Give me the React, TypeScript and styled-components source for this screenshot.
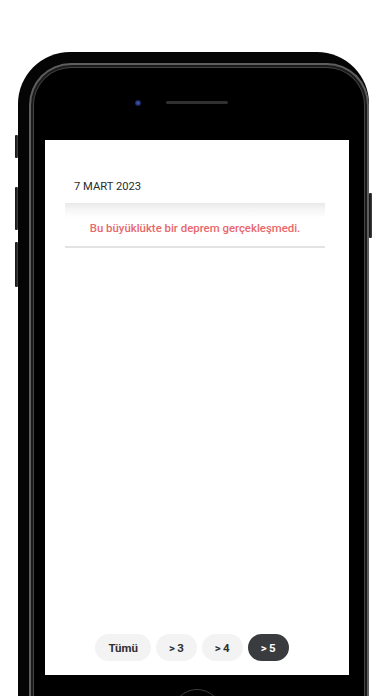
import React, { useState } from 'react'
import styled, { createGlobalStyle } from 'styled-components'

const GlobalStyle = createGlobalStyle`
  html, body {
    margin: 0;
    padding: 0;
    height: 696px;
    overflow: hidden;
    background: #ffffff;
    font-family: Roboto, Inter, "Liberation Sans", sans-serif;
  }
`

const Device = styled.div`
  display: flex;
  align-items: flex-start;
  padding: 52px 0 0 15px;
`

const SideRail = styled.div<{ offset: number }>`
  display: flex;
  flex-direction: column;
  width: 3px;
  margin-top: ${(p) => p.offset}px;
`

const SideKey = styled.div<{ length: number; gap: number }>`
  height: ${(p) => p.length}px;
  margin-bottom: ${(p) => p.gap}px;
  background: linear-gradient(90deg, #111 0, #2a2a2a 60%, #4a4a4a 100%);
  border-radius: 1px;
`

const Phone = styled.div`
  box-sizing: border-box;
  width: 351px;
  height: 720px;
  padding: 11px 0 0 11px;
  background: #050505;
  border-radius: 52px 52px 0 0;
  display: flex;
  flex-direction: column;
`

const Rim = styled.div`
  flex: 1;
  display: flex;
  flex-direction: column;
  padding: 0 18px 0 14px;
  border: 2px solid #5e5e5e;
  border-bottom: none;
  border-radius: 42px 42px 0 0;
  background: #000;
  box-shadow: inset 0 0 0 2px #1a1a1a, inset 0 0 0 3px #444;
`

const TopBar = styled.div`
  height: 75px;
  display: grid;
  grid-template-columns: 1fr auto 1fr;
  align-items: center;
`

const Camera = styled.div`
  justify-self: end;
  margin-right: 25px;
  width: 6px;
  height: 6px;
  border-radius: 50%;
  background: radial-gradient(circle, #4d63c8 0, #26357a 45%, #0c1020 100%);
`

const Speaker = styled.div`
  width: 62px;
  height: 3px;
  border-radius: 2px;
  background: #303030;
`

const Screen = styled.div`
  height: 535px;
  background: #fff;
  display: flex;
  flex-direction: column;
`

const DateLabel = styled.div`
  padding: 40px 29px 0;
  font-size: 11.2px;
  line-height: 14px;
  color: #2b2b2b;
`

const EmptyCard = styled.div`
  margin: 9px 24px 0 20px;
  padding: 18px 8px 11px;
  border-bottom: 2px solid #e3e3e3;
  background: linear-gradient(#e9e9e9 0, #f5f5f5 6px, #ffffff 15px);
  text-align: center;
  font-size: 11.4px;
  font-weight: 500;
  line-height: 14px;
  color: #e8686c;
`

const Filler = styled.div`
  flex: 1;
`

const Filters = styled.div`
  display: flex;
  justify-content: center;
  gap: 5px;
  padding: 0 10px 14px 0;
`

const Pill = styled.button<{ active?: boolean }>`
  height: 27px;
  padding: 0 13px;
  border: none;
  border-radius: 14px;
  font-family: inherit;
  font-size: 11.5px;
  font-weight: 700;
  background: ${(p) => (p.active ? '#3a3b3e' : '#f3f3f3')};
  color: ${(p) => (p.active ? '#ffffff' : '#303030')};
  cursor: pointer;
`

const HomeArea = styled.div`
  display: flex;
  justify-content: center;
  padding-top: 14px;
`

const HomeButton = styled.div`
  width: 48px;
  height: 48px;
  border-radius: 50%;
  border: 1.5px solid #3c3c3c;
`

const filters = ['Tümü', '3', '4', '5']

export default function App() {
  const [active, setActive] = useState('5')

  return (
    <>
      <GlobalStyle />
      <Device>
        <SideRail offset={83}>
          <SideKey length={23} gap={29} />
          <SideKey length={43} gap={12} />
          <SideKey length={45} gap={0} />
        </SideRail>
        <Phone>
          <Rim>
            <TopBar>
              <Camera />
              <Speaker />
            </TopBar>
            <Screen>
              <DateLabel>7 MART 2023</DateLabel>
              <EmptyCard>Bu büyüklükte bir deprem gerçekleşmedi.</EmptyCard>
              <Filler />
              <Filters>
                {filters.map((f) => (
                  <Pill key={f} active={active === f} onClick={() => setActive(f)}>
                    {f === 'Tümü' ? f : `>\u2009${f}`}
                  </Pill>
                ))}
              </Filters>
            </Screen>
            <HomeArea>
              <HomeButton />
            </HomeArea>
          </Rim>
        </Phone>
        <SideRail offset={141}>
          <SideKey length={45} gap={0} />
        </SideRail>
      </Device>
    </>
  )
}
